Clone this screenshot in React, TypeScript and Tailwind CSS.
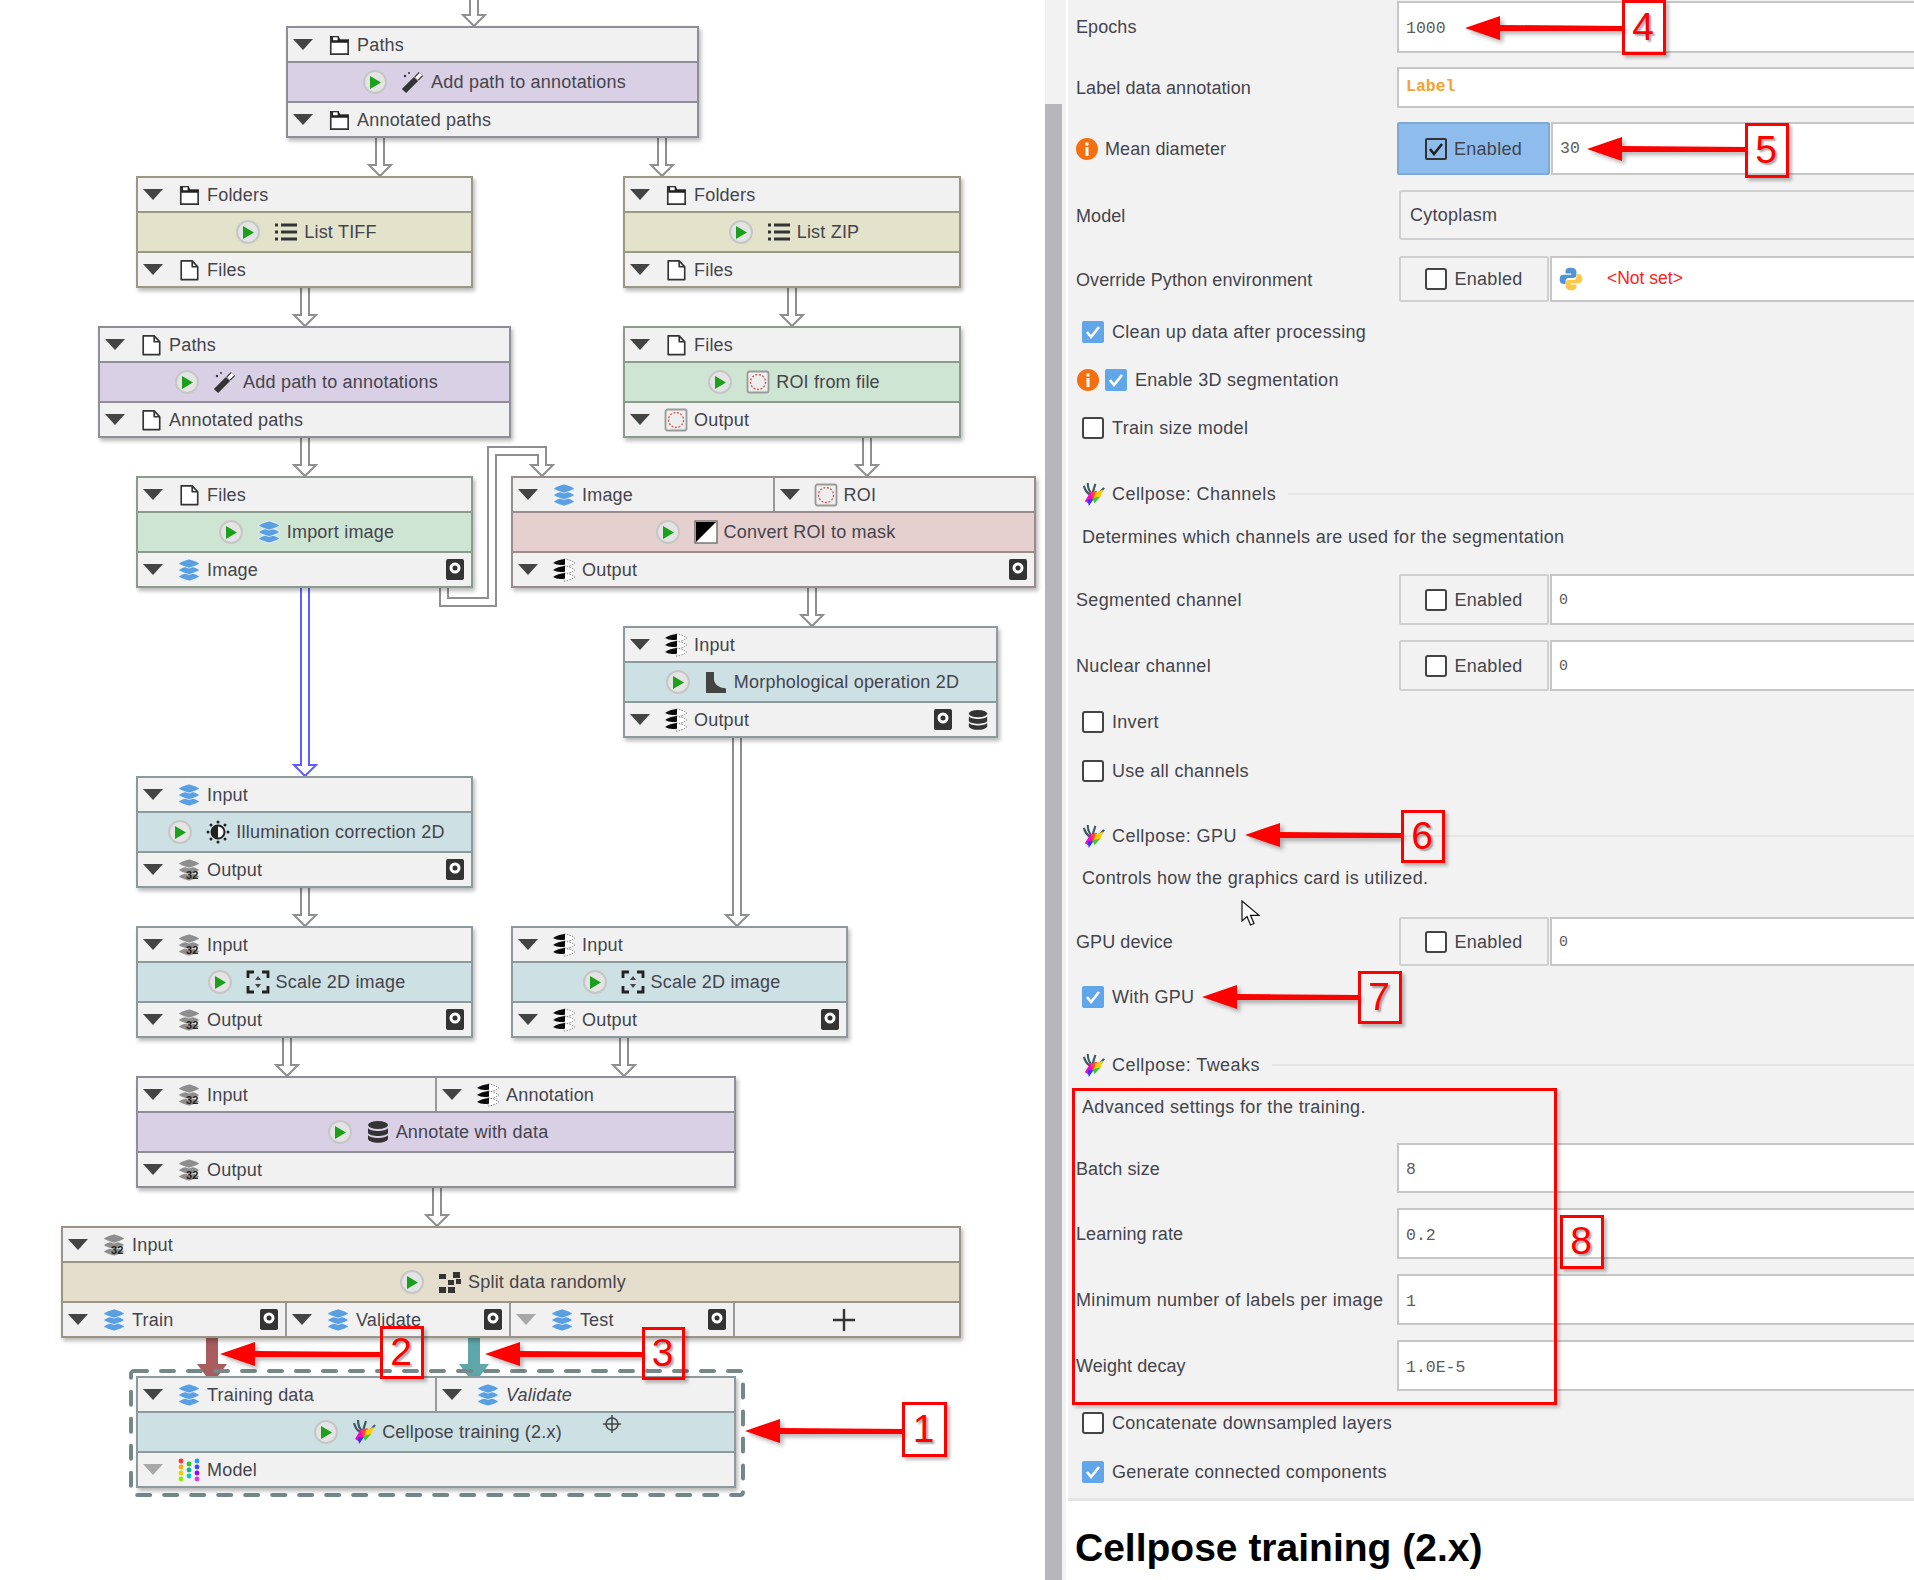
import React from "react";

type IconName =
  | "folder" | "file" | "blue" | "bw" | "s32" | "roi" | "model"
  | "wand" | "list" | "mask" | "morph" | "sun" | "scale" | "db" | "split" | "cellpose";

const Tri = ({ off }: { off?: boolean }) => (
  <svg width="20" height="11" viewBox="0 0 20 11" className="shrink-0">
    <polygon points="0,0 20,0 10,11" fill={off ? "#a8a8a8" : "#444444"} />
  </svg>
);

const Lens = ({ y, fill }: { y: number; fill: string }) => (
  <path d={`M1 ${y}Q4 ${y - 2.4} 12 ${y - 4.6}Q20 ${y - 2.4} 23 ${y}Q20 ${y + 2.4} 12 ${y + 4.6}Q4 ${y + 2.4} 1 ${y}z`} fill={fill} stroke="#ffffff" strokeWidth="0.7" />
);

const Layers = ({ fill }: { fill: string }) => (
  <>
    <Lens y={18.5} fill={fill} />
    <Lens y={12} fill={fill} />
    <Lens y={5.5} fill={fill} />
  </>
);

const Icon = ({ name, size = 24 }: { name: IconName; size?: number }) => {
  const body = () => {
    switch (name) {
      case "folder":
        return (
          <>
            <path d="M3 22V3h8l1.5 3.5H22V22z" fill="#ffffff" stroke="#333" strokeWidth="1.8" />
            <path d="M3.5 3h8l1.5 3.5H22V9.5H3.5z" fill="#222" />
            <path d="M10.5 3.6v3.2h-5V3.6z" fill="#fff" />
          </>
        );
      case "file":
        return <path d="M3.5 2h12l6 6.5V22.500H3.500zM15.500 2v6.500h6" fill="#fff" stroke="#333" strokeWidth="1.8" strokeLinejoin="round" />;
      case "blue":
        return <Layers fill="#5a9fe2" />;
      case "bw":
        return (
          <>
            {[5, 12, 19].map((y) => (
              <g key={y}>
                <path d={`M12 ${y - 4}Q18 ${y - 3.5} 23 ${y}Q18 ${y + 3.5} 12 ${y + 4}z`} fill="#fff" stroke="#777" strokeWidth="1" strokeDasharray="1.4 1.4" />
                <path d={`M1 ${y}Q6 ${y - 3.5} 13 ${y - 4}V${y + 1.5}Q6 ${y + 3} 1 ${y}z`} fill="#0a0a0a" />
              </g>
            ))}
          </>
        );
      case "s32":
        return (
          <>
            <Layers fill="#8e8e8e" />
            <text x="9" y="21" fontSize="11" fontWeight="700" fill="#222" fontFamily="Liberation Sans, sans-serif">32</text>
          </>
        );
      case "roi":
        return (
          <>
            <rect x="1.5" y="1.5" width="21" height="21" rx="2" fill="#eee" stroke="#999" strokeWidth="1.8" />
            <circle cx="12" cy="12" r="7.5" fill="none" stroke="#d05050" strokeWidth="1.3" strokeDasharray="2 1.6" />
          </>
        );
      case "model":
        return (
          <>
            {[["#f33", 4, 3], ["#fa0", 4, 9], ["#ec0", 4, 15], ["#8e0", 4, 21], ["#2c2", 12, 6], ["#0b8", 12, 12], ["#0cc", 12, 18], ["#29f", 20, 3], ["#44f", 20, 9], ["#90f", 20, 15], ["#e3d", 20, 21]].map(([c, x, y]) => (
              <circle key={`${x}-${y}`} cx={x as number} cy={y as number} r="2.4" fill={c as string} />
            ))}
          </>
        );
      case "wand":
        return (
          <>
            <path d="M3 21L15 9" stroke="#333" strokeWidth="6" />
            <path d="M15.500 8.500L20 4" stroke="#333" strokeWidth="6" />
            <path d="M15.500 8.500L20 4" stroke="#fff" strokeWidth="3.400" />
            <circle cx="4" cy="6" r="1.200" fill="#333" />
            <circle cx="8" cy="3" r="1" fill="#333" />
          </>
        );
      case "list":
        return (
          <>
            {[5, 12, 19].map((y) => (
              <g key={y} fill="#333">
                <rect x="1" y={y - 1.5} width="3" height="3" />
                <rect x="7" y={y - 1.5} width="16" height="3" />
              </g>
            ))}
          </>
        );
      case "mask":
        return (
          <>
            <rect x="1" y="1" width="22" height="22" fill="#fff" stroke="#777" strokeWidth="1.5" />
            <polygon points="2,2 22,2 2,22" fill="#000" />
          </>
        );
      case "morph":
        return <path d="M2 2h8v7c0 4 3 7 7 8.500l5 1V23H2z" fill="#444" />;
      case "sun":
        return (
          <>
            <circle cx="12" cy="12" r="6.500" fill="#fff" stroke="#222" strokeWidth="2" />
            <path d="M12 5.500a6.500 6.500 0 0 0 0 13z" fill="#222" />
            {[[12, 2], [12, 22], [2, 12], [22, 12], [5, 5], [19, 5], [5, 19], [19, 19]].map(([x, y]) => (
              <circle key={`${x}-${y}`} cx={x} cy={y} r="1.500" fill="#222" />
            ))}
          </>
        );
      case "scale":
        return (
          <>
            <path d="M2 8V2h6M16 2h6v6M22 16v6h-6M8 22H2v-6" fill="none" stroke="#222" strokeWidth="2.800" />
            <polygon points="12,6 15,10 9,10" fill="#444" />
            <polygon points="12,18 15,14 9,14" fill="#444" />
          </>
        );
      case "db":
        return (
          <>
            <ellipse cx="12" cy="5" rx="10" ry="4" fill="#333" />
            <path d="M2 8c2 4 18 4 20 0v5c-2 4-18 4-20 0z" fill="#333" />
            <path d="M2 15c2 4 18 4 20 0v4c-2 5-18 5-20 0z" fill="#333" />
          </>
        );
      case "split":
        return (
          <g fill="#333">
            <rect x="1" y="4" width="7" height="5" />
            <rect x="15" y="2" width="7" height="6" />
            <rect x="10" y="10" width="6" height="5" />
            <rect x="18" y="9" width="5" height="5" />
            <rect x="1" y="17" width="7" height="6" />
            <rect x="10" y="17" width="7" height="6" />
          </g>
        );
      case "cellpose":
        return (
          <>
            <path d="M6 0c0 5 1 8 4 11M2 3c1 4 3 7 6 9M14 1c-1 3-2 6-3 10M23 5c-2 3-4 5-8 7" fill="none" stroke="#3c5a64" strokeWidth="2.200" />
            <path d="M3 19l6-10 5 3-6 10z" fill="#f0c" />
            <path d="M9 10l6-2 3 4-7 5z" fill="#f44" />
            <path d="M14 10l8-3-3 8-7 3z" fill="#fc0" />
            <path d="M11 16l8-2-6 7z" fill="#3c3" />
            <path d="M6 17l6 0-5 7z" fill="#33f" />
          </>
        );
    }
  };
  return (
    <svg width={size} height={size} viewBox="0 0 24 24" className="shrink-0">
      {body()}
    </svg>
  );
};

const PlayBtn = () => (
  <span className="mr-[8px] flex h-[24px] w-[24px] shrink-0 items-center justify-center rounded-full border-2 border-[#c6c6c6] bg-[#e4e4e4]">
    <svg width="12" height="13" viewBox="0 0 12 13">
      <polygon points="1,0 12,6.5 1,13" fill="#1ba01b" />
    </svg>
  </span>
);

const Disk = () => (
  <svg width="18" height="21" viewBox="0 0 18 21" className="shrink-0">
    <rect width="18" height="21" rx="2" fill="#333" />
    <circle cx="9" cy="9" r="5.5" fill="#fff" />
    <circle cx="9" cy="9" r="2.5" fill="#333" />
  </svg>
);

type SlotDef = {
  label?: string;
  icon?: IconName;
  off?: boolean;
  disk?: boolean;
  db?: boolean;
  italic?: boolean;
  plus?: boolean;
};

const Slot = ({ s, first }: { s: SlotDef; first: boolean }) => (
  <div className={`flex h-full min-w-0 items-center ${s.plus ? "flex-[1.01]" : "flex-1"} ${first ? "" : "border-l-2 border-[#999]"}`}>
    {s.plus ? (
      <span className="flex w-full justify-center pr-[6px]">
        <svg width="22" height="22" viewBox="0 0 22 22">
          <path d="M11 0v22M0 11h22" stroke="#333" strokeWidth="2.4" />
        </svg>
      </span>
    ) : (
      <>
        <span className="ml-[5px]">
          <Tri off={s.off} />
        </span>
        <span className="ml-[12px] flex w-[28px] justify-center">
          <Icon name={s.icon as IconName} size={s.icon === "folder" || s.icon === "file" ? 22 : 24} />
        </span>
        <span className={`ml-[4px] ${s.italic ? "italic" : ""}`}>{s.label}</span>
        {(s.disk || s.db) && (
          <span className="ml-auto mr-[7px] flex items-center gap-[15px]">
            {s.disk && <Disk />}
            {s.db && <Icon name="db" size={22} />}
          </span>
        )}
      </>
    )}
  </div>
);

const FlowNode = ({
  pos,
  tint,
  edge,
  inputs,
  title,
  icon,
  outputs,
  children,
}: {
  pos: string;
  tint: string;
  edge: string;
  inputs: SlotDef[];
  title: string;
  icon: IconName;
  outputs: SlotDef[];
  children?: React.ReactNode;
}) => (
  <div className={`absolute ${pos} ${edge} border-2 bg-[#f1f1f1] text-[18px] leading-none tracking-[0.2px] text-[#44444c] shadow-[2px_3px_4px_rgba(0,0,0,0.28)]`}>
    <div className="flex h-[33px]">
      {inputs.map((s, i) => (
        <Slot key={i} s={s} first={i === 0} />
      ))}
    </div>
    <div className={`relative flex h-[42px] items-center justify-center gap-[6px] border-y-2 pl-[4px] ${edge} ${tint}`}>
      <PlayBtn />
      <Icon name={icon} />
      <span>{title}</span>
      {children}
    </div>
    <div className="flex h-[33px]">
      {outputs.map((s, i) => (
        <Slot key={i} s={s} first={i === 0} />
      ))}
    </div>
  </div>
);

// connector pipes: hollow double line with an open arrow head
const Pipe = ({ d, tip, color = "#8f8f8f" }: { d: string; tip: [number, number]; color?: string }) => {
  const [x, y] = tip;
  return (
    <g>
      <path d={d} fill="none" stroke={color} strokeWidth="10" />
      <path d={d} fill="none" stroke="#ffffff" strokeWidth="6" />
      <polygon points={`${x - 11},${y - 11} ${x + 11},${y - 11} ${x},${y}`} fill="#fff" stroke={color} strokeWidth="2" />
      <rect x={x - 3} y={y - 14} width="6" height="6" fill="#fff" />
    </g>
  );
};

const SolidPipe = ({ x, color }: { x: number; color: string }) => (
  <g fill={color}>
    <rect x={x - 6} y="1338" width="12" height="30" />
    <polygon points={`${x - 15},1364 ${x + 15},1364 ${x + 6},1376 ${x - 6},1376`} />
  </g>
);

const Connectors = () => (
  <svg width="1045" height="1580" className="absolute left-0 top-0">
    <Pipe d="M474 0V22" tip={[474, 26]} />
    <Pipe d="M380 138V172" tip={[380, 176]} />
    <Pipe d="M662 138V172" tip={[662, 176]} />
    <Pipe d="M305 288V322" tip={[305, 326]} />
    <Pipe d="M792 288V322" tip={[792, 326]} />
    <Pipe d="M305 438V472" tip={[305, 476]} />
    <Pipe d="M867 438V472" tip={[867, 476]} />
    <Pipe d="M444 585V602H492V451H542V472" tip={[542, 476]} />
    <Pipe d="M305 588V772" tip={[305, 776]} color="#5f5fff" />
    <Pipe d="M812 588V622" tip={[812, 626]} />
    <Pipe d="M737 738V922" tip={[737, 926]} />
    <Pipe d="M305 888V922" tip={[305, 926]} />
    <Pipe d="M287 1038V1072" tip={[287, 1076]} />
    <Pipe d="M624 1038V1072" tip={[624, 1076]} />
    <Pipe d="M437 1188V1222" tip={[437, 1226]} />
    <SolidPipe x={212} color="#a85c5e" />
    <SolidPipe x={474} color="#5fa6a8" />
    <rect x="131" y="1371" width="612" height="124" rx="3" fill="none" stroke="#748888" strokeWidth="4" strokeDasharray="13 14" strokeLinecap="round" />
  </svg>
);

const Graph = () => (
  <div className="relative h-full w-[1045px] shrink-0">
    <Connectors />
    <FlowNode pos="left-[286px] top-[26px] w-[413px]" tint="bg-[#d9d0e6]" edge="border-[#8e8e96]" inputs={[{ label: "Paths", icon: "folder" }]} title="Add path to annotations" icon="wand" outputs={[{ label: "Annotated paths", icon: "folder" }]} />
    <FlowNode pos="left-[136px] top-[176px] w-[337px]" tint="bg-[#e3e3cc]" edge="border-[#9a9a84]" inputs={[{ label: "Folders", icon: "folder" }]} title="List TIFF" icon="list" outputs={[{ label: "Files", icon: "file" }]} />
    <FlowNode pos="left-[623px] top-[176px] w-[338px]" tint="bg-[#e3e3cc]" edge="border-[#9a9a84]" inputs={[{ label: "Folders", icon: "folder" }]} title="List ZIP" icon="list" outputs={[{ label: "Files", icon: "file" }]} />
    <FlowNode pos="left-[98px] top-[326px] w-[413px]" tint="bg-[#d9d0e6]" edge="border-[#8e8e96]" inputs={[{ label: "Paths", icon: "file" }]} title="Add path to annotations" icon="wand" outputs={[{ label: "Annotated paths", icon: "file" }]} />
    <FlowNode pos="left-[623px] top-[326px] w-[338px]" tint="bg-[#cfe5d4]" edge="border-[#8c9a8e]" inputs={[{ label: "Files", icon: "file" }]} title="ROI from file" icon="roi" outputs={[{ label: "Output", icon: "roi" }]} />
    <FlowNode pos="left-[136px] top-[476px] w-[337px]" tint="bg-[#cfe5d4]" edge="border-[#8c9a8e]" inputs={[{ label: "Files", icon: "file" }]} title="Import image" icon="blue" outputs={[{ label: "Image", icon: "blue", disk: true }]} />
    <FlowNode pos="left-[511px] top-[476px] w-[525px]" tint="bg-[#e5cfcf]" edge="border-[#9a8c8c]" inputs={[{ label: "Image", icon: "blue" }, { label: "ROI", icon: "roi" }]} title="Convert ROI to mask" icon="mask" outputs={[{ label: "Output", icon: "bw", disk: true }]} />
    <FlowNode pos="left-[623px] top-[626px] w-[375px]" tint="bg-[#cde0e4]" edge="border-[#8c9a9c]" inputs={[{ label: "Input", icon: "bw" }]} title="Morphological operation 2D" icon="morph" outputs={[{ label: "Output", icon: "bw", disk: true, db: true }]} />
    <FlowNode pos="left-[136px] top-[776px] w-[337px]" tint="bg-[#cde0e4]" edge="border-[#8c9a9c]" inputs={[{ label: "Input", icon: "blue" }]} title="Illumination correction 2D" icon="sun" outputs={[{ label: "Output", icon: "s32", disk: true }]} />
    <FlowNode pos="left-[136px] top-[926px] w-[337px]" tint="bg-[#cde0e4]" edge="border-[#8c9a9c]" inputs={[{ label: "Input", icon: "s32" }]} title="Scale 2D image" icon="scale" outputs={[{ label: "Output", icon: "s32", disk: true }]} />
    <FlowNode pos="left-[511px] top-[926px] w-[337px]" tint="bg-[#cde0e4]" edge="border-[#8c9a9c]" inputs={[{ label: "Input", icon: "bw" }]} title="Scale 2D image" icon="scale" outputs={[{ label: "Output", icon: "bw", disk: true }]} />
    <FlowNode pos="left-[136px] top-[1076px] w-[600px]" tint="bg-[#d9d0e6]" edge="border-[#8e8e96]" inputs={[{ label: "Input", icon: "s32" }, { label: "Annotation", icon: "bw" }]} title="Annotate with data" icon="db" outputs={[{ label: "Output", icon: "s32" }]} />
    <FlowNode pos="left-[61px] top-[1226px] w-[900px]" tint="bg-[#e6decd]" edge="border-[#9a9486]" inputs={[{ label: "Input", icon: "s32" }]} title="Split data randomly" icon="split" outputs={[{ label: "Train", icon: "blue", disk: true }, { label: "Validate", icon: "blue", disk: true }, { label: "Test", icon: "blue", disk: true, off: true }, { plus: true }]} />
    <FlowNode pos="left-[136px] top-[1376px] w-[600px]" tint="bg-[#cde0e4]" edge="border-[#8c9a9c]" inputs={[{ label: "Training data", icon: "blue" }, { label: "Validate", icon: "blue", italic: true }]} title="Cellpose training (2.x)" icon="cellpose" outputs={[{ label: "Model", icon: "model", off: true }]}>
      <svg width="18" height="18" viewBox="0 0 18 18" className="absolute left-[465px] top-[2px]">
        <circle cx="9" cy="9" r="6" fill="none" stroke="#444" strokeWidth="1.5" />
        <path d="M9 0v18M0 9h18" stroke="#444" strokeWidth="1.5" />
      </svg>
    </FlowNode>
  </div>
);

const Box = ({ checked, on }: { checked?: boolean; on?: boolean }) =>
  checked ? (
    <span className={`flex h-[22px] w-[22px] shrink-0 items-center justify-center rounded-[2px] ${on ? "border-2 border-[#333]" : "bg-[#62a6ea]"}`}>
      <svg width="16" height="14" viewBox="0 0 16 14">
        <path d="M2 7l4 5 8-10" fill="none" stroke={on ? "#222" : "#fff"} strokeWidth="2.6" />
      </svg>
    </span>
  ) : (
    <span className="h-[22px] w-[22px] shrink-0 rounded-[3px] border-2 border-[#444] bg-[#fff]" />
  );

const Info = () => (
  <svg width="22" height="22" viewBox="0 0 22 22" className="shrink-0">
    <circle cx="11" cy="11" r="11" fill="#f56f0e" />
    <rect x="9.5" y="9" width="3" height="9" fill="#fff" />
    <rect x="9.5" y="4.5" width="3" height="3" fill="#fff" />
  </svg>
);

const Python = () => (
  <svg width="26" height="26" viewBox="0 0 24 24" className="shrink-0">
    <path d="M12 1.5c-5 0-5 2.2-5 3.5v2h5.2v1H4.8C2.8 8 1.5 9.6 1.5 12.2s1.2 4.3 3.3 4.3H7v-2.7c0-1.6 1.2-2.8 2.8-2.8h4.6c1.5 0 2.6-1.2 2.6-2.6V5c0-1.7-1.6-3.5-5-3.5z" fill="#4f94d4" />
    <path d="M12 22.5c5 0 5-2.2 5-3.5v-2h-5.2v-1h7.4c2 0 3.3-1.6 3.3-4.2s-1.2-4.3-3.3-4.3H17v2.7c0 1.6-1.2 2.8-2.8 2.8H9.6C8.1 13 7 14.2 7 15.6V19c0 1.7 1.6 3.5 5 3.5z" fill="#fbc94a" />
  </svg>
);

const fieldCls = "flex flex-1 items-center self-stretch border-2 border-r-0 border-[#c6c6c6] bg-white pl-[7px] font-['Liberation_Mono',monospace] text-[16.5px] text-[#5c5c5c]";

const EnableBtn = ({ on }: { on?: boolean }) => (
  <div className={`flex shrink-0 items-center justify-center gap-[7px] self-stretch rounded-[2px] border-2 tracking-[0.3px] ${on ? "w-[153px] border-[#7fa8d4] bg-[#8ebcec]" : "ml-[2px] w-[150px] border-[#d0d0d0] bg-[#f2f2f2]"}`}>
    <Box checked={on} on={on} />
    <span>Enabled</span>
  </div>
);

const Row = ({ cls, label, info, wide, children }: { cls: string; label: string; info?: boolean; wide?: boolean; children: React.ReactNode }) => (
  <div className={`flex items-center ${cls}`}>
    <div className={`flex w-[329px] shrink-0 items-center gap-[7px] pl-[8px] pt-[1px] ${wide ? "tracking-[0.33px]" : "tracking-[0.08px]"}`}>
      {info && <Info />}
      <span>{label}</span>
    </div>
    {children}
  </div>
);

const CheckRow = ({ cls, label, checked, info }: { cls: string; label: string; checked?: boolean; info?: boolean }) => (
  <div className={`flex h-[36px] items-center pl-[14px] tracking-[0.3px] ${cls}`}>
    {info && (
      <span className="-ml-[5px] mr-[6px]">
        <Info />
      </span>
    )}
    <Box checked={checked} />
    <span className="ml-[8px]">{label}</span>
  </div>
);

const Section = ({ cls, label }: { cls: string; label: string }) => (
  <div className={`flex h-[36px] items-center pl-[14px] tracking-[0.45px] ${cls}`}>
    <Icon name="cellpose" size={23} />
    <span className="ml-[7px]">{label}</span>
    <span className="ml-[12px] h-[2px] flex-1 bg-[#e6e6e6]" />
  </div>
);

const Desc = ({ cls, text }: { cls: string; text: string }) => (
  <div className={`flex h-[34px] items-center pl-[14px] tracking-[0.33px] ${cls}`}>{text}</div>
);

const ValueField = ({ v }: { v: string }) => <div className={`${fieldCls} pt-[5px]`}>{v}</div>;

const ZeroField = () => <div className={`${fieldCls} ml-[1px] pt-[1px] !text-[15px]`}>0</div>;

const Settings = () => (
  <div className="flex min-w-0 flex-1 flex-col border-l-2 border-white">
    <div className="flex h-[1498px] flex-col bg-[#f2f2f2] text-[18px] leading-none text-[#44444c]">
      <Row cls="h-[54px] pb-[1px]" label="Epochs">
        <div className="flex h-[52px] flex-1 items-center border-2 border-r-0 border-[#c6c6c6] bg-white pl-[7px] pt-[5px] font-['Liberation_Mono',monospace] text-[16.5px] text-[#5c5c5c]">1000</div>
      </Row>
      <Row cls="h-[41px] mt-[13px]" label="Label data annotation">
        <div className={`${fieldCls} !font-bold !text-[#f5a030]`}>Label</div>
      </Row>
      <Row cls="h-[53px] mt-[14px]" label="Mean diameter" info>
        <EnableBtn on />
        <div className={`${fieldCls} ml-[1px] pt-[2px]`}>30</div>
      </Row>
      <Row cls="h-[50px] mt-[15px]" label="Model">
        <div className="ml-[2px] flex flex-1 items-center self-stretch rounded-l-[3px] border-2 border-r-0 border-[#d0d0d0] pl-[9px] tracking-[0.25px]">Cytoplasm</div>
      </Row>
      <Row cls="h-[46px] mt-[16px]" label="Override Python environment">
        <EnableBtn />
        <div className="ml-[1px] flex flex-1 items-center self-stretch border-2 border-r-0 border-[#c6c6c6] bg-white pl-[6px]">
          <Python />
          <span className="ml-[23px] text-[17.5px] text-[#ff2020]">&lt;Not set&gt;</span>
        </div>
      </Row>
      <CheckRow cls="mt-[12px]" label="Clean up data after processing" checked />
      <CheckRow cls="mt-[12px]" label="Enable 3D segmentation" checked info />
      <CheckRow cls="mt-[12px]" label="Train size model" />

      <Section cls="mt-[30px]" label="Cellpose: Channels" />
      <Desc cls="mt-[8px]" text="Determines which channels are used for the segmentation" />
      <Row cls="h-[51px] mt-[20px]" label="Segmented channel" wide>
        <EnableBtn />
        <ZeroField />
      </Row>
      <Row cls="h-[51px] mt-[15px]" label="Nuclear channel" wide>
        <EnableBtn />
        <ZeroField />
      </Row>
      <CheckRow cls="mt-[13px]" label="Invert" />
      <CheckRow cls="mt-[13px]" label="Use all channels" />

      <Section cls="mt-[29px]" label="Cellpose: GPU" />
      <Desc cls="mt-[7px]" text="Controls how the graphics card is utilized." />
      <Row cls="h-[49px] mt-[22px]" label="GPU device">
        <EnableBtn />
        <ZeroField />
      </Row>
      <CheckRow cls="mt-[13px]" label="With GPU" checked />

      <Section cls="mt-[32px]" label="Cellpose: Tweaks" />
      <Desc cls="mt-[7px]" text="Advanced settings for the training." />
      <Row cls="h-[50px] mt-[19px]" label="Batch size">
        <ValueField v="8" />
      </Row>
      <Row cls="h-[51px] mt-[15px]" label="Learning rate">
        <ValueField v="0.2" />
      </Row>
      <Row cls="h-[51px] mt-[15px]" label="Minimum number of labels per image" wide>
        <ValueField v="1" />
      </Row>
      <Row cls="h-[51px] mt-[15px]" label="Weight decay">
        <ValueField v="1.0E-5" />
      </Row>
      <CheckRow cls="mt-[14px]" label="Concatenate downsampled layers" />
      <CheckRow cls="mt-[13px]" label="Generate connected components" checked />
    </div>
    <div className="flex-1 border-t-[3px] border-[#e4e4e4] bg-white pl-[7px] pt-[25px] text-[39px] font-bold leading-[44px] text-black">
      Cellpose training (2.x)
    </div>
  </div>
);

// red call-outs drawn over the screenshot
const Callout = ({ pos, n }: { pos: string; n: string }) => (
  <div className={`absolute ${pos} flex items-center justify-center border-[3px] border-[#ff0000] pb-[3px] pr-[2px] text-[39px] leading-none text-[#ff0000] shadow-[3px_3px_3px_rgba(0,0,0,0.25)] [text-shadow:2px_2px_2px_rgba(0,0,0,0.35)]`}>
    {n}
  </div>
);

const ArrowTo = ({ x, y, end }: { x: number; y: number; end: number }) => (
  <polygon
    fill="#ff0000"
    points={`${x},${y} ${x + 35},${y - 12} ${x + 35},${y - 3} ${end},${y - 2} ${end},${y + 3} ${x + 35},${y + 3} ${x + 35},${y + 12}`}
  />
);

const Annotations = () => (
  <>
    <svg width="1914" height="1580" className="absolute left-0 top-0 drop-shadow-[3px_3px_2px_rgba(0,0,0,0.3)]">
      <ArrowTo x={745} y={1431} end={903} />
      <ArrowTo x={220} y={1354} end={381} />
      <ArrowTo x={485} y={1354} end={643} />
      <ArrowTo x={1465} y={28} end={1623} />
      <ArrowTo x={1587} y={149} end={1746} />
      <ArrowTo x={1245} y={835} end={1402} />
      <ArrowTo x={1202} y={997} end={1359} />
    </svg>
    <Callout pos="left-[902px] top-[1402px] w-[45px] h-[55px]" n="1" />
    <Callout pos="left-[380px] top-[1326px] w-[44px] h-[53px]" n="2" />
    <Callout pos="left-[642px] top-[1327px] w-[43px] h-[53px]" n="3" />
    <Callout pos="left-[1622px] top-0 w-[44px] h-[55px]" n="4" />
    <Callout pos="left-[1745px] top-[123px] w-[44px] h-[55px]" n="5" />
    <Callout pos="left-[1401px] top-[810px] w-[44px] h-[53px]" n="6" />
    <Callout pos="left-[1358px] top-[971px] w-[44px] h-[53px]" n="7" />
    <Callout pos="left-[1560px] top-[1215px] w-[44px] h-[54px]" n="8" />
    <div className="absolute left-[1072px] top-[1088px] h-[317px] w-[485px] border-[3px] border-[#ff0000] shadow-[3px_3px_3px_rgba(0,0,0,0.2)]" />
    <svg width="20" height="28" viewBox="0 0 20 28" className="absolute left-[1241px] top-[900px]">
      <path d="M1 1v20l5-4.5 3.5 8.5 3.5-1.5-3.5-8.2H18z" fill="#fff" stroke="#111" strokeWidth="1.2" />
    </svg>
  </>
);

export default function App() {
  return (
    <div className="relative flex h-[1580px] w-[1914px] overflow-hidden bg-white font-['Liberation_Sans',sans-serif]">
      <Graph />
      <div className="flex w-[17px] shrink-0 flex-col bg-[#f2f2f2]">
        <div className="h-[104px]" />
        <div className="flex-1 bg-[#b7b7bb]" />
      </div>
      <div className="w-[4px] shrink-0 bg-[#f2f2f2]" />
      <Settings />
      <Annotations />
    </div>
  );
}
